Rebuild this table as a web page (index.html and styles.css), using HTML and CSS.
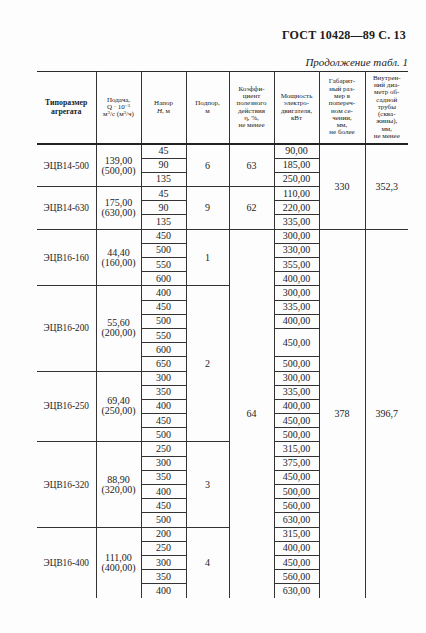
FILE: index.html
```html
<!DOCTYPE html>
<html lang="ru">
<head>
<meta charset="utf-8">
<link rel="stylesheet" href="styles.css">
</head>
<body>
<div class="page">
  <div class="title">ГОСТ 10428—89 С. 13</div>
  <div class="cont">Продолжение табл. 1</div>
  <table class="tbl">
    <colgroup>
      <col class="w1"><col class="w2"><col class="w3"><col class="w4"><col class="w5"><col class="w6"><col class="w7"><col class="w8">
    </colgroup>
    <thead>
      <tr class="hd">
        <th class="c1 b">Типоразмер<br>агрегата</th>
        <th>Подача,<br>Q · 10<sup>−3</sup><br>м<sup>3</sup>/с (м<sup>3</sup>/ч)</th>
        <th>Напор<br><i>H</i>, м</th>
        <th>Подпор,<br>м</th>
        <th>Коэффи-<br>циент<br>полезного<br>действия<br>η, %,<br>не менее</th>
        <th>Мощность<br>электро-<br>двигателя,<br>кВт</th>
        <th>Габарит-<br>ный раз-<br>мер в<br>попереч-<br>ном се-<br>чении,<br>мм,<br>не более</th>
        <th>Внутрен-<br>ний диа-<br>метр об-<br>садной<br>трубы<br>(сква-<br>жины),<br>мм,<br>не менее</th>
      </tr>
    </thead>
    <tbody>
      <tr><td class="c1 nm" rowspan="3">ЭЦВ14-500</td><td class="q" rowspan="3">139,00<br>(500,00)</td><td>45</td><td rowspan="3">6</td><td rowspan="3">63</td><td>90,00</td><td rowspan="6">330</td><td rowspan="6">352,3</td></tr>
      <tr><td>90</td><td>185,00</td></tr>
      <tr><td>135</td><td>250,00</td></tr>

      <tr><td class="c1 nm" rowspan="3">ЭЦВ14-630</td><td class="q" rowspan="3">175,00<br>(630,00)</td><td>45</td><td rowspan="3">9</td><td rowspan="3">62</td><td>110,00</td></tr>
      <tr><td>90</td><td>220,00</td></tr>
      <tr><td>135</td><td>335,00</td></tr>

      <tr><td class="c1 nm" rowspan="4">ЭЦВ16-160</td><td class="q" rowspan="4">44,40<br>(160,00)</td><td>450</td><td rowspan="4">1</td><td class="end" rowspan="26">64</td><td>300,00</td><td class="end" rowspan="26">378</td><td class="end" rowspan="26">396,7</td></tr>
      <tr><td>500</td><td>330,00</td></tr>
      <tr><td>550</td><td>355,00</td></tr>
      <tr><td>600</td><td>400,00</td></tr>

      <tr><td class="c1 nm" rowspan="6">ЭЦВ16-200</td><td class="q" rowspan="6">55,60<br>(200,00)</td><td>400</td><td rowspan="11">2</td><td>300,00</td></tr>
      <tr><td>450</td><td>335,00</td></tr>
      <tr><td>500</td><td>400,00</td></tr>
      <tr><td>550</td><td rowspan="2">450,00</td></tr>
      <tr><td>600</td></tr>
      <tr><td>650</td><td>500,00</td></tr>

      <tr><td class="c1 nm" rowspan="5">ЭЦВ16-250</td><td class="q" rowspan="5">69,40<br>(250,00)</td><td>300</td><td>300,00</td></tr>
      <tr><td>350</td><td>335,00</td></tr>
      <tr><td>400</td><td>400,00</td></tr>
      <tr><td>450</td><td>450,00</td></tr>
      <tr><td>500</td><td>500,00</td></tr>

      <tr><td class="c1 nm" rowspan="6">ЭЦВ16-320</td><td class="q" rowspan="6">88,90<br>(320,00)</td><td>250</td><td rowspan="6">3</td><td>315,00</td></tr>
      <tr><td>300</td><td>375,00</td></tr>
      <tr><td>350</td><td>450,00</td></tr>
      <tr><td>400</td><td>500,00</td></tr>
      <tr><td>450</td><td>560,00</td></tr>
      <tr><td>500</td><td>630,00</td></tr>

      <tr><td class="c1 nm end" rowspan="5">ЭЦВ16-400</td><td class="q end" rowspan="5">111,00<br>(400,00)</td><td>200</td><td class="end" rowspan="5">4</td><td>315,00</td></tr>
      <tr><td>250</td><td>400,00</td></tr>
      <tr><td>300</td><td>450,00</td></tr>
      <tr><td>350</td><td>560,00</td></tr>
      <tr><td class="end">400</td><td class="end">630,00</td></tr>
    </tbody>
  </table>
</div>
</body>
</html>
```

FILE: styles.css
```css
html, body {
  margin: 0;
  padding: 0;
  background: #fdfdfd;
}
.page {
  padding: 28px 18px 0 37px;
  font-family: "Liberation Serif", "DejaVu Serif", serif;
  color: #1c1c1c;
}
.title {
  text-align: right;
  font-size: 12px;
  font-weight: bold;
  line-height: 14px;
  padding-right: 2px;
  letter-spacing: 0.2px;
}
.cont {
  text-align: right;
  font-size: 11px;
  font-style: italic;
  line-height: 14px;
  margin-top: 13px;
}
.tbl {
  margin-top: 2px;
  width: 371px;
  table-layout: fixed;
  border-collapse: collapse;
  border-top: 1.5px solid #2a2a2a;
}
.w1 { width: 59px; }
.w2 { width: 45px; }
.w3 { width: 45px; }
.w4 { width: 43px; }
.w5 { width: 45px; }
.w6 { width: 45px; }
.w7 { width: 46px; }
.w8 { width: 43px; }

.hd th {
  height: 71px;
  padding: 0 1px;
  font-weight: normal;
  font-size: 7px;
  line-height: 7.3px;
  text-align: center;
  vertical-align: middle;
  border-left: 1px solid #333;
  border-bottom: 2.5px solid #222;
}
.hd th.c1 {
  border-left: none;
}
.hd th.b {
  font-weight: bold;
  font-size: 7.8px;
  line-height: 8.5px;
}
.hd sup {
  font-size: 5px;
  vertical-align: 2px;
  line-height: 0;
}
.tbl tbody tr {
  height: 14.2px;
}
.tbl td {
  padding: 0;
  font-size: 10px;
  line-height: 12px;
  text-align: center;
  vertical-align: middle;
  border-left: 1px solid #333;
  border-bottom: 1px solid #333;
  white-space: nowrap;
}
.tbl td.c1 {
  border-left: none;
}
.tbl td.nm {
  font-size: 9.3px;
}
.tbl td.q {
  line-height: 10px;
}
.tbl td.end {
  border-bottom: none;
}
```
